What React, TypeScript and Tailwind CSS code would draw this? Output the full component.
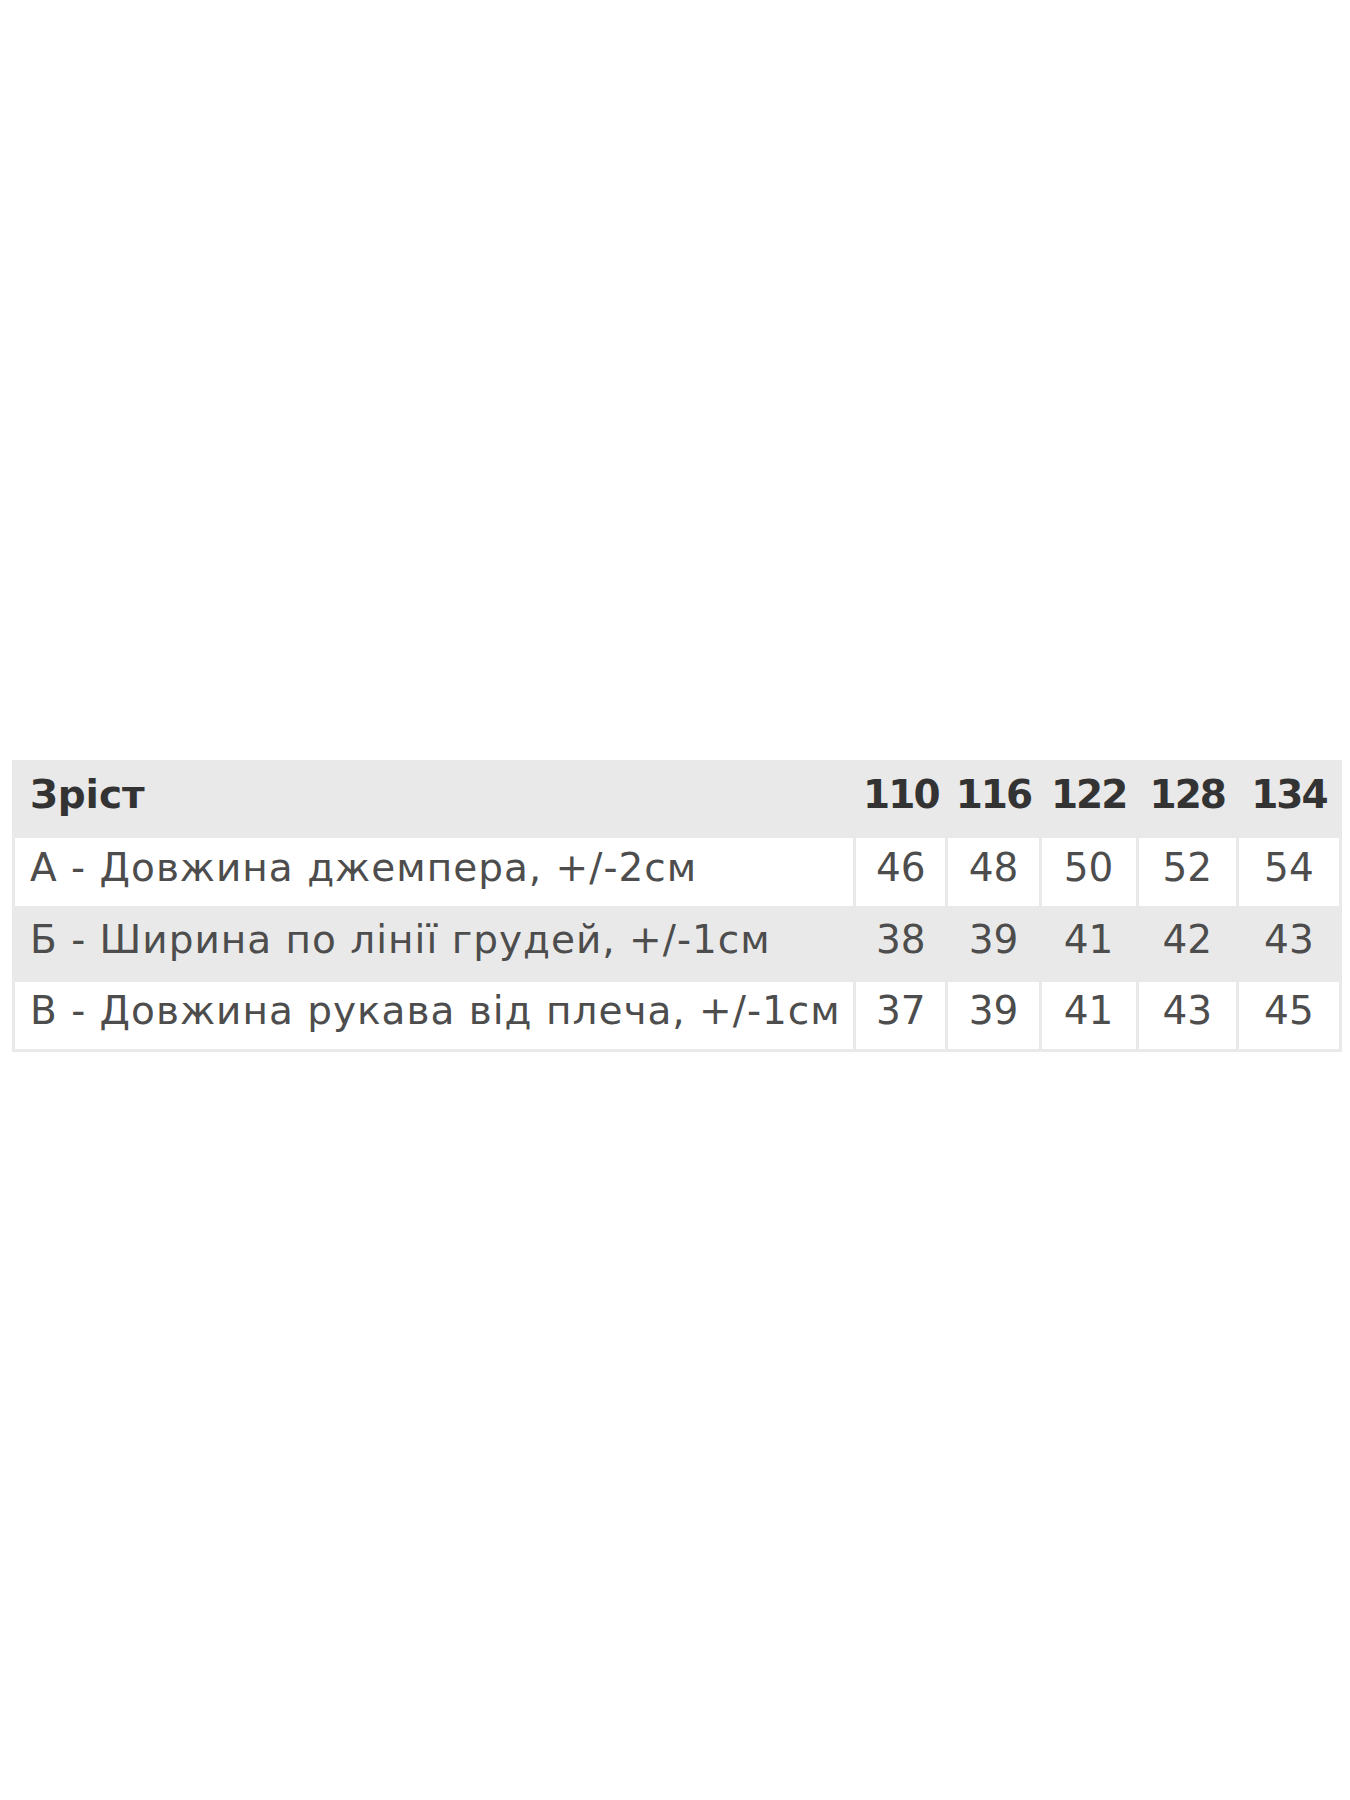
const sizes = ["110", "116", "122", "128", "134"];

const rows = [
  { label: "А - Довжина джемпера, +/-2см", values: ["46", "48", "50", "52", "54"], white: true, h: "h-[68px]" },
  { label: "Б - Ширина по лінії грудей, +/-1см", values: ["38", "39", "41", "42", "43"], white: false, h: "h-[70px]" },
  { label: "В - Довжина рукава від плеча, +/-1см", values: ["37", "39", "41", "43", "45"], white: true, h: "h-[66px]" },
];

const colWidths = ["w-[89px]", "w-[90px]", "w-[94px]", "w-[97px]", "w-[100px]"];

export default function App() {
  return (
    <div className="min-h-[1800px] w-full bg-white pt-[760px] pl-[12px] font-['DejaVu_Sans',sans-serif]">
      <table className="w-[1330px] table-fixed border-separate border-spacing-[3px] bg-[#e9e9e9] text-[39px] text-[#4d4d4d]">
        <colgroup>
          <col className="w-[837px]" />
          {colWidths.map((w, i) => (
            <col key={i} className={w} />
          ))}
        </colgroup>
        <thead>
          <tr className="h-[72px]">
            <th className="p-0 pb-[8px] pl-[15px] text-left font-bold text-[#333333]">Зріст</th>
            {sizes.map((s) => (
              <th key={s} className="p-0 pb-[8px] text-center font-bold tracking-[-2px] text-[#333333]">
                {s}
              </th>
            ))}
          </tr>
        </thead>
        <tbody>
          {rows.map((row) => (
            <tr key={row.label} className={row.h}>
              <td className={`p-0 pb-[8px] pl-[15px] whitespace-nowrap tracking-[1px] ${row.white ? "bg-white" : ""}`}>
                {row.label}
              </td>
              {row.values.map((v, i) => (
                <td key={i} className={`p-0 pb-[8px] text-center ${row.white ? "bg-white" : ""}`}>
                  {v}
                </td>
              ))}
            </tr>
          ))}
        </tbody>
      </table>
    </div>
  );
}
